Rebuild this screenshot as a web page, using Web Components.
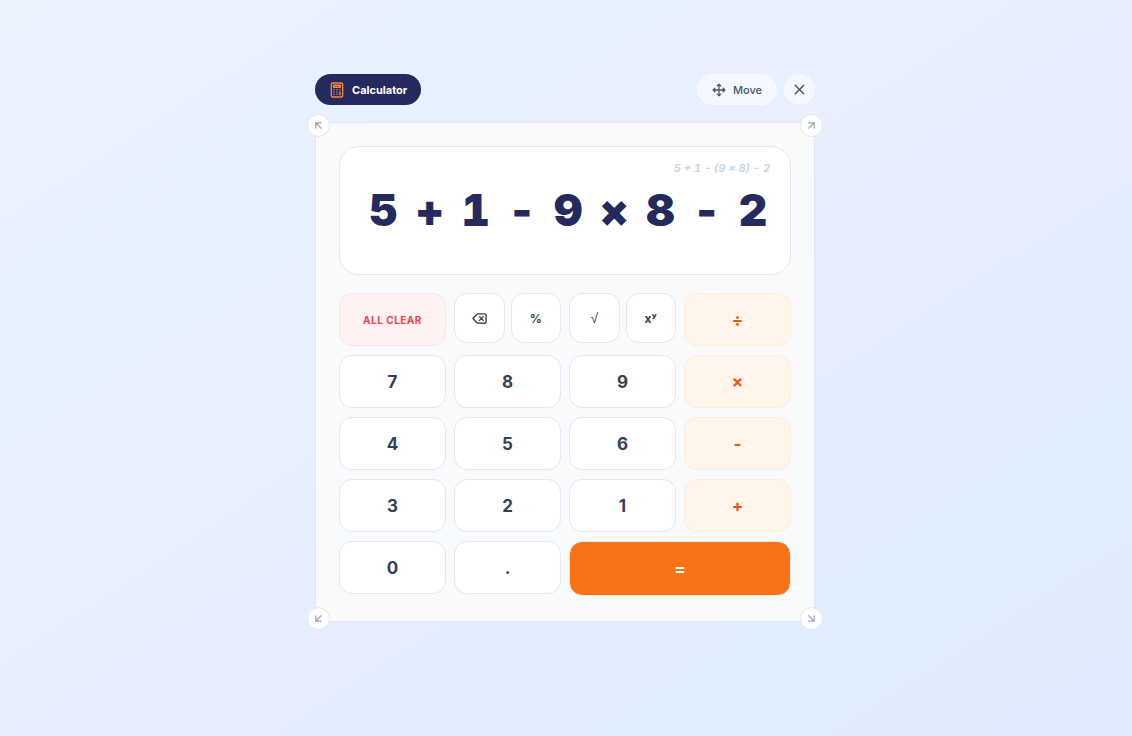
<!DOCTYPE html>
<html lang="en">
<head>
<meta charset="UTF-8">
<meta name="viewport" content="width=device-width, initial-scale=1">
<title>Calculator</title>
<style>
  body {
    margin: 0;
    min-height: 100vh;
    box-sizing: border-box;
    padding: 74px 16px 24px;
    font-family: Inter, "Liberation Sans", sans-serif;
    color: #334155;
    background: linear-gradient(to bottom right, #edf3ff 0%, #e8f1ff 25%, #e8efff 45%, #e3eeff 62%, #e1eeff 84%, #e0eafe 94%);
  }
</style>
</head>
<body>
<calc-widget></calc-widget>

<script>
const arrows = {
  nw: 'M17 17 7 7M7 17V7h10',
  ne: 'M7 17 17 7M7 7h10v10',
  sw: 'M17 7 7 17M17 17H7V7',
  se: 'm7 7 10 10M17 7v10H7',
};

class CalcBadge extends HTMLElement {
  constructor() {
    super();
    this.attachShadow({ mode: 'open' });
    this.shadowRoot.innerHTML = `
    <style>
    :host {
      display: flex;
      align-items: center;
      gap: 7px;
      height: 31px;
      padding: 0 14px;
      border-radius: 16px;
      background: #252a5e;
      color: #fff;
      font-size: 11px;
      font-weight: 700;
    }
    svg { display: block; color: #f58a3c; }
    </style>
    <svg width="16" height="16" viewBox="0 0 24 24" fill="none" stroke="currentColor" stroke-width="2" stroke-linecap="round" stroke-linejoin="round" aria-hidden="true">
      <rect x="3.5" y="1.5" width="17" height="21" rx="2"/>
      <path d="M7 5h10v3H7zM16.500 15v4M16.500 11.500h.01M12 11.500h.01M7.500 11.500h.01M12 15h.01M7.500 15h.01M12 18.500h.01M7.500 18.500h.01" stroke-width="2.2"/>
    </svg>
    <span><slot></slot></span>
    `;
  }
}
customElements.define('calc-badge', CalcBadge);

class CalcTool extends HTMLElement {
  constructor() {
    super();
    this.attachShadow({ mode: 'open' });
    this.shadowRoot.innerHTML = `
    <style>
    :host { display: block; }
    button {
      display: flex;
      align-items: center;
      justify-content: center;
      gap: 7px;
      box-sizing: border-box;
      height: 31px;
      min-width: 31px;
      margin: 0;
      padding: 0 14px;
      border: 1px solid #f8fbff;
      border-radius: 16px;
      background: #f5f9ff;
      color: #475569;
      font: 500 11px Inter, "Liberation Sans", sans-serif;
      cursor: pointer;
    }
    :host([round]) button { padding: 0; }
    </style>
    <button type="button"><slot name="icon"></slot><slot></slot></button>
    `;
  }
  connectedCallback() {
    if (this.hasAttribute('label')) {
      this.shadowRoot.querySelector('button').setAttribute('aria-label', this.getAttribute('label'));
    }
  }
}
customElements.define('calc-tool', CalcTool);

class CalcHandle extends HTMLElement {
  constructor() {
    super();
    this.attachShadow({ mode: 'open' });
  }
  connectedCallback() {
    const corner = this.getAttribute('corner');
    this.shadowRoot.innerHTML = `
    <style>
    :host { position: absolute; }
    :host([corner^="n"]) { top: -9px; }
    :host([corner^="s"]) { bottom: -9px; }
    :host([corner$="w"]) { left: -9px; }
    :host([corner$="e"]) { right: -9px; }
    button {
      display: grid;
      place-items: center;
      box-sizing: border-box;
      width: 23px;
      height: 23px;
      padding: 0;
      border: 1px solid #e2e8f0;
      border-radius: 50%;
      background: #fff;
      color: #94a3b8;
    }
    svg { display: block; }
    </style>
    <button type="button" aria-label="Resize ${corner}">
      <svg width="13" height="13" viewBox="0 0 24 24" fill="none" stroke="currentColor" stroke-width="2.2" stroke-linecap="round" stroke-linejoin="round"><path d="${arrows[corner]}"/></svg>
    </button>
    `;
  }
}
customElements.define('calc-handle', CalcHandle);

class CalcDisplay extends HTMLElement {
  constructor() {
    super();
    this.attachShadow({ mode: 'open' });
    this.shadowRoot.innerHTML = `
    <style>
    :host {
      display: block;
      box-sizing: border-box;
      height: 129px;
      padding: 12px 20px;
      border: 1px solid #e2e8f0;
      border-radius: 20px;
      background: #fff;
      text-align: right;
      white-space: nowrap;
      font-variant-numeric: tabular-nums;
    }
    .history {
      height: 18px;
      line-height: 18px;
      font-size: 11px;
      font-weight: 700;
      font-style: italic;
      color: #cbd5e1;
    }
    .value {
      display: block;
      padding-top: 4px;
      line-height: 58px;
      font-size: 44px;
      font-weight: 900;
      letter-spacing: 3px;
      color: #252a5e;
    }
    </style>
    <div class="history"><slot name="history"></slot></div>
    <output class="value"><slot></slot></output>
    `;
  }
}
customElements.define('calc-display', CalcDisplay);

class CalcKey extends HTMLElement {
  constructor() {
    super();
    this.attachShadow({ mode: 'open' });
    this.shadowRoot.innerHTML = `
    <style>
    :host { display: block; height: 53px; }
    button {
      display: flex;
      align-items: center;
      justify-content: center;
      box-sizing: border-box;
      width: 100%;
      height: 100%;
      margin: 0;
      padding: 0;
      border: 1px solid #e2e8f0;
      border-radius: 13px;
      background: #fff;
      color: #334155;
      font: 700 17px Inter, "Liberation Sans", sans-serif;
      cursor: pointer;
    }
    :host([kind="small"]) { height: 50px; }
    :host([kind="small"]) button { font-size: 12px; }
    :host([kind="clear"]) button {
      border-color: #fee2e2;
      background: #fef2f2;
      color: #ef4444;
      font-size: 10px;
      letter-spacing: 0.05em;
    }
    :host([kind="operator"]) button {
      border-color: #ffedd5;
      background: #fff5eb;
      color: #ea580c;
    }
    :host([kind="equals"]) { grid-column: span 2; height: 55px; }
    :host([kind="equals"]) button {
      border-color: #e2e8f0;
      background: #f97316;
      background-clip: padding-box;
      color: #fff;
    }
    </style>
    <button type="button"><slot></slot></button>
    `;
  }
  connectedCallback() {
    if (this.hasAttribute('label')) {
      this.shadowRoot.querySelector('button').setAttribute('aria-label', this.getAttribute('label'));
    }
  }
}
customElements.define('calc-key', CalcKey);

class CalcWidget extends HTMLElement {
  constructor() {
    super();
    this.attachShadow({ mode: 'open' });
    this.shadowRoot.innerHTML = `
    <style>
    :host {
      display: block;
      max-width: 500px;
      margin: 0 auto;
      padding-right: 2px;
    }
    header {
      display: flex;
      align-items: center;
      justify-content: space-between;
      margin-bottom: 17px;
    }
    .tools { display: flex; gap: 7px; }
    svg { display: block; }
    main {
      position: relative;
      display: grid;
      gap: 18px;
      padding: 23px 23px 27px;
      border: 1px solid #dde7f3;
      background: #f8fafc;
    }
    .keys {
      display: grid;
      grid-template-columns: repeat(4, minmax(0, 1fr));
      grid-auto-rows: 53px;
      gap: 9px 8px;
    }
    .pair {
      display: grid;
      grid-template-columns: 1fr 1fr;
      gap: 6px;
      align-items: start;
    }
    .root {
      font: 400 14px "Liberation Sans", sans-serif;
    }
    </style>
    <header>
      <calc-badge>Calculator</calc-badge>
      <div class="tools">
        <calc-tool>
          <svg slot="icon" width="14" height="14" viewBox="0 0 24 24" fill="none" stroke="currentColor" stroke-width="2.2" stroke-linecap="round" stroke-linejoin="round"><path d="M12 2v20M2 12h20M9 5l3-3 3 3M9 19l3 3 3-3M5 9l-3 3 3 3M19 9l3 3-3 3"/></svg>
          Move
        </calc-tool>
        <calc-tool round label="Close">
          <svg slot="icon" width="17" height="17" viewBox="0 0 24 24" fill="none" stroke="currentColor" stroke-width="2" stroke-linecap="round"><path d="M18 6 6 18M6 6l12 12"/></svg>
        </calc-tool>
      </div>
    </header>
    <main>
      <calc-display><span slot="history">5 + 1 - (9 × 8) - 2</span>5 + 1 - 9 × 8 - 2</calc-display>
      <div class="keys">
        <calc-key kind="clear">ALL CLEAR</calc-key>
        <div class="pair">
          <calc-key kind="small" label="Backspace">
            <svg width="15" height="15" viewBox="0 0 24 24" fill="none" stroke="currentColor" stroke-width="2.2" stroke-linecap="round" stroke-linejoin="round"><path d="M9.500 4.500a2 2 0 0 0-1.500.7L1.500 12 8 18.800a2 2 0 0 0 1.500.7H20.500a2 2 0 0 0 2-2V6.500a2 2 0 0 0-2-2ZM12 9l6 6M18 9l-6 6"/></svg>
          </calc-key>
          <calc-key kind="small">%</calc-key>
        </div>
        <div class="pair">
          <calc-key kind="small"><span class="root">√</span></calc-key>
          <calc-key kind="small">xʸ</calc-key>
        </div>
        <calc-key kind="operator">÷</calc-key>
        <calc-key>7</calc-key>
        <calc-key>8</calc-key>
        <calc-key>9</calc-key>
        <calc-key kind="operator">×</calc-key>
        <calc-key>4</calc-key>
        <calc-key>5</calc-key>
        <calc-key>6</calc-key>
        <calc-key kind="operator">-</calc-key>
        <calc-key>3</calc-key>
        <calc-key>2</calc-key>
        <calc-key>1</calc-key>
        <calc-key kind="operator">+</calc-key>
        <calc-key>0</calc-key>
        <calc-key>.</calc-key>
        <calc-key kind="equals">=</calc-key>
      </div>
      <calc-handle corner="nw"></calc-handle>
      <calc-handle corner="ne"></calc-handle>
      <calc-handle corner="sw"></calc-handle>
      <calc-handle corner="se"></calc-handle>
    </main>
    `;
  }
}
customElements.define('calc-widget', CalcWidget);
</script>
</body>
</html>
